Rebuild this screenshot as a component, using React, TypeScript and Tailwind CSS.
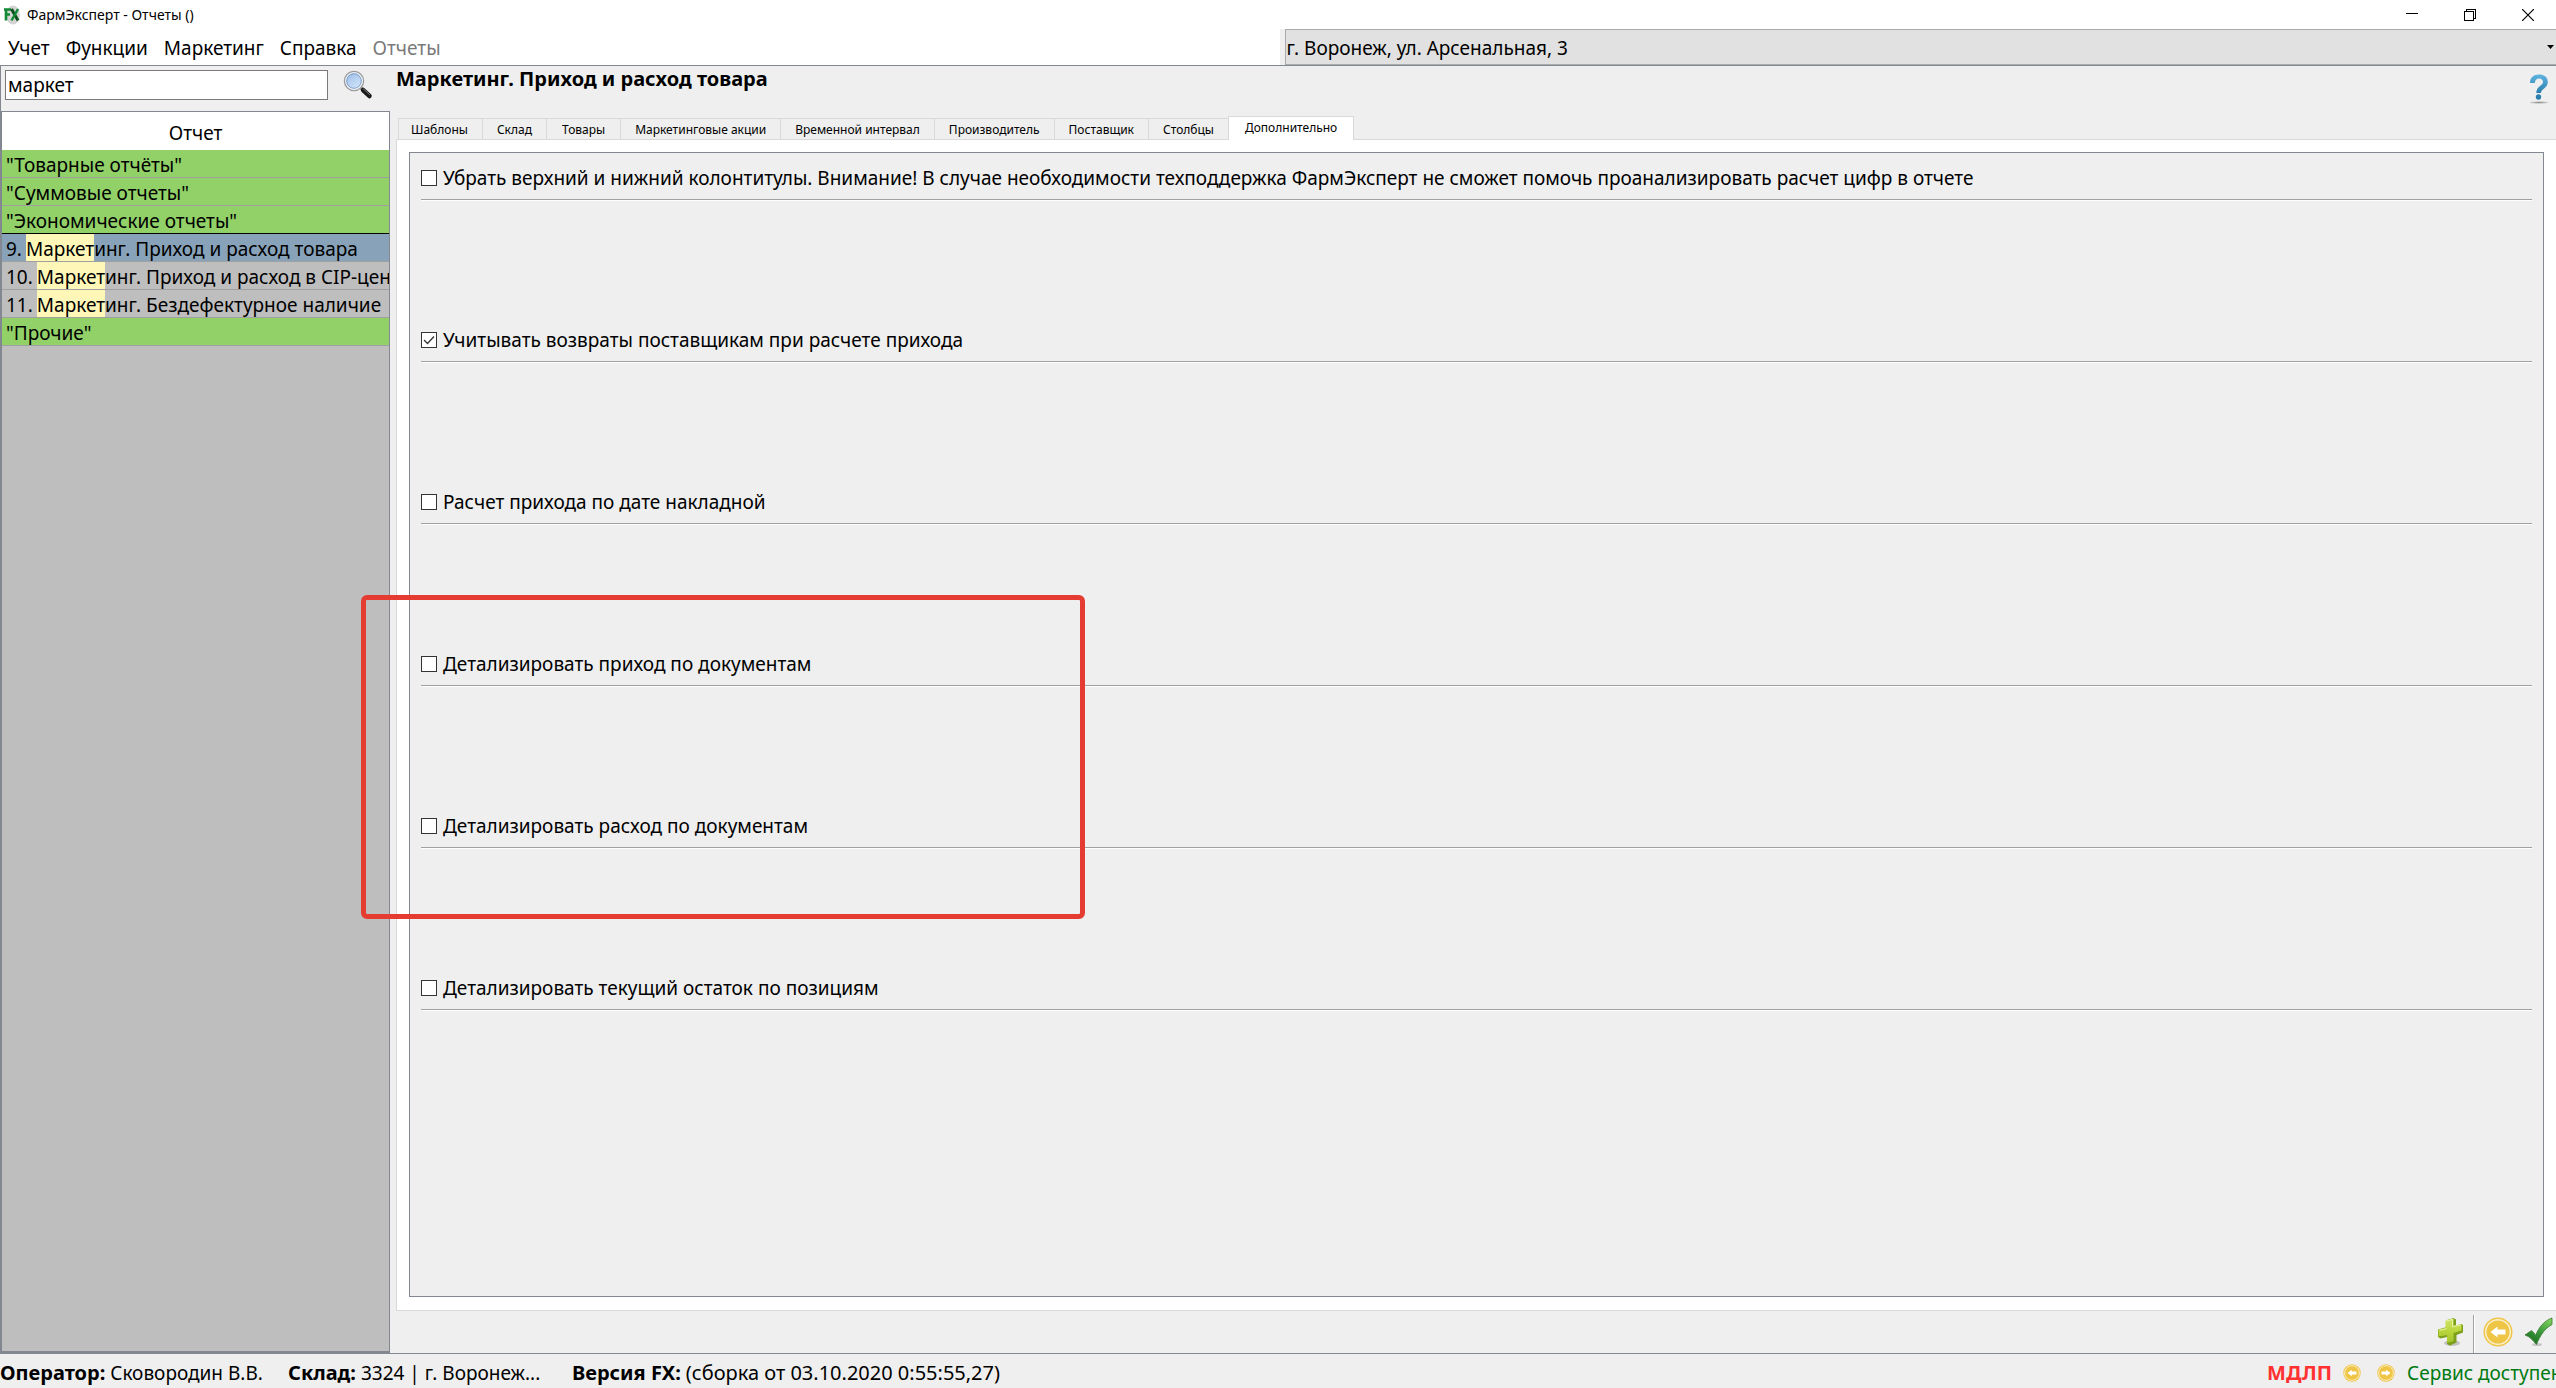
import type { ReactNode } from "react";

const menu = ["Учет", "Функции", "Маркетинг", "Справка"];

const tabs = [
  "Шаблоны",
  "Склад",
  "Товары",
  "Маркетинговые акции",
  "Временной интервал",
  "Производитель",
  "Поставщик",
  "Столбцы",
];

const options = [
  {
    label:
      "Убрать верхний и нижний колонтитулы. Внимание! В случае необходимости техподдержка ФармЭксперт не сможет помочь проанализировать расчет цифр в отчете",
    checked: false,
  },
  { label: "Учитывать возвраты поставщикам при расчете прихода", checked: true },
  { label: "Расчет прихода по дате накладной", checked: false },
  { label: "Детализировать приход по документам", checked: false },
  { label: "Детализировать расход по документам", checked: false },
  { label: "Детализировать текущий остаток по позициям", checked: false },
];

type Report = { kind: "group" | "item"; prefix?: string; match?: string; text: string; selected?: boolean };

const reports: Report[] = [
  { kind: "group", text: '"Товарные отчёты"' },
  { kind: "group", text: '"Суммовые отчеты"' },
  { kind: "group", text: '"Экономические отчеты"' },
  { kind: "item", prefix: "9.", match: "Маркет", text: "инг. Приход и расход товара", selected: true },
  { kind: "item", prefix: "10.", match: "Маркет", text: "инг. Приход и расход в CIP-цен" },
  { kind: "item", prefix: "11.", match: "Маркет", text: "инг. Бездефектурное наличие" },
  { kind: "group", text: '"Прочие"' },
];

function AppLogo() {
  return (
    <svg width="17" height="20" viewBox="0 0 17 20" aria-hidden="true">
      <ellipse cx="9" cy="10" rx="7" ry="9.5" fill="#d4d4d4" />
      <path d="M0 4.500h7M2 4.500v11M2 9.500h4" stroke="#128a35" strokeWidth="2.600" fill="none" />
      <path d="M7.500 4l6.500 11.500" stroke="#0a4f1e" strokeWidth="3" fill="none" />
      <path d="M14 4L7.500 15.500" stroke="#128a35" strokeWidth="2.500" fill="none" />
    </svg>
  );
}

function SearchIcon() {
  return (
    <svg width="30" height="30" viewBox="0 0 30 30" aria-hidden="true">
      <defs>
        <linearGradient id="lens" x1="0" y1="0" x2="0.6" y2="1">
          <stop offset="0" stopColor="#8fb2e2" />
          <stop offset="0.5" stopColor="#b5cff0" />
          <stop offset="1" stopColor="#d3e6fb" />
        </linearGradient>
      </defs>
      <path d="M17.500 17.500l3 3" stroke="#8a8a8a" strokeWidth="3" />
      <path d="M20 20l6.500 6" stroke="#1b1b1b" strokeWidth="4.500" strokeLinecap="round" />
      <path d="M20.500 19l6 5.500" stroke="#777" strokeWidth="1" strokeLinecap="round" />
      <circle cx="11" cy="11" r="9.500" fill="url(#lens)" stroke="#9b9b9b" strokeWidth="1.500" />
      <circle cx="11" cy="11" r="8.200" fill="none" stroke="#f1f4f8" strokeWidth="1.400" />
      <circle cx="11" cy="11" r="7.300" fill="none" stroke="#5f82b3" strokeWidth="0.700" />
    </svg>
  );
}

function HelpIcon() {
  return (
    <svg width="20" height="31" viewBox="0 0 20 31" aria-hidden="true">
      <defs>
        <linearGradient id="help" x1="0" y1="0" x2="0" y2="1">
          <stop offset="0" stopColor="#5fb4e0" />
          <stop offset="1" stopColor="#2a7fae" />
        </linearGradient>
        <radialGradient id="helpShadow">
          <stop offset="0" stopColor="#8c8c8c" />
          <stop offset="1" stopColor="#d8d8d8" />
        </radialGradient>
      </defs>
      <ellipse cx="10" cy="28.500" rx="9.500" ry="1.300" fill="url(#helpShadow)" />
      <path
        d="M1 9C1 3.500 4.500 0.500 10 0.500s8.800 3 8.800 7.500c0 3-1.500 4.800-4 6.700-1.800 1.400-2.800 2.300-2.800 4.300H7.300c0-3.600 1.500-5.300 4-7.300 1.900-1.500 2.700-2.300 2.700-3.900C14 5.900 12.500 4.600 10 4.600S6 6.200 5.800 9z"
        fill="url(#help)"
      />
      <circle cx="9.500" cy="23" r="2.700" fill="#2a7fae" />
    </svg>
  );
}

function PlusIcon() {
  return (
    <svg width="28" height="30" viewBox="0 0 28 30" aria-hidden="true">
      <defs>
        <linearGradient id="plus" x1="0" y1="0" x2="0" y2="1">
          <stop offset="0" stopColor="#d3e56b" />
          <stop offset="0.5" stopColor="#b9d63c" />
          <stop offset="1" stopColor="#a3c52a" />
        </linearGradient>
      </defs>
      <ellipse cx="16" cy="26" rx="8" ry="3" fill="#c2c2c2" />
      <path
        d="M11 3l6.500-2L20 2.500v6L25.500 7l1.500 1v7.500L20.500 18v7.500L14 28.500l-3-1.500v-7l-6.500 1.500L2 20v-7.500l9-2.500z"
        fill="#7c9f1c"
      />
      <path d="M9.500 3.500L17.500 1.500v7.200L25.500 7v6.500l-8 2.500v8L11 26v-8L2.500 19.500v-7L9.500 11z" fill="url(#plus)" />
      <path d="M10.500 4l6-1.600v7.300l8-1.700M3.500 13.300l7-1.600" stroke="#e8f3a4" strokeWidth="1" fill="none" />
    </svg>
  );
}

function CoinArrow({ size, flip }: { size: number; flip?: boolean }) {
  return (
    <svg width={size} height={size} viewBox="0 0 30 30" aria-hidden="true">
      <circle cx="15" cy="15" r="14.500" fill="#efc546" />
      <circle cx="15" cy="15" r="12.300" fill="none" stroke="#faf0cf" strokeWidth="1.500" />
      <path
        d="M7.500 15l7-5.500V12.500H22.500v5H14.500v3z"
        fill="#fff"
        transform={flip ? "matrix(-1 0 0 1 30 0)" : undefined}
      />
    </svg>
  );
}

function CheckIcon() {
  return (
    <svg width="29" height="30" viewBox="0 0 29 30" aria-hidden="true">
      <defs>
        <linearGradient id="tick" x1="0.8" y1="0" x2="0.300" y2="1">
          <stop offset="0" stopColor="#7fd25a" />
          <stop offset="0.500" stopColor="#3b9a3b" />
          <stop offset="1" stopColor="#1c6e22" />
        </linearGradient>
      </defs>
      <ellipse cx="13" cy="27.500" rx="5" ry="1.600" fill="#c4c4c4" />
      <path
        d="M1 18l6.500-4.500c2 1.500 3 3 4 5C15 10 20 4 28 1v6.500C20 12 16 19 12.500 27.500 9 23.500 6 19.500 1 18z"
        fill="url(#tick)"
        stroke="#3c7a35"
        strokeWidth="0.800"
      />
    </svg>
  );
}

function IconButton({ label, children }: { label: string; children: ReactNode }) {
  return (
    <button type="button" aria-label={label} className="flex shrink-0 items-center justify-center">
      {children}
    </button>
  );
}

function TitleBar() {
  return (
    <header className="flex h-[29px] shrink-0 items-center bg-white pl-1">
      <AppLogo />
      <h1 className="ml-[6px] text-[14px] leading-5">ФармЭксперт - Отчеты ()</h1>
      <div className="mr-[6px] ml-auto flex gap-[14px]">
        <button type="button" aria-label="Свернуть" className="flex h-7 w-11 items-center justify-center">
          <svg width="12" height="13" viewBox="0 0 12 13">
            <path d="M0 5.500h12" stroke="#000" shapeRendering="crispEdges" />
          </svg>
        </button>
        <button type="button" aria-label="Восстановить" className="flex h-7 w-11 items-center justify-center">
          <svg width="12" height="12" viewBox="0 0 12 12" fill="none" stroke="#000" shapeRendering="crispEdges">
            <path d="M0.500 2.500h9v9h-9zM2.500 2.500v-2h9v9h-2" />
          </svg>
        </button>
        <button type="button" aria-label="Закрыть" className="flex h-7 w-11 items-center justify-center">
          <svg width="12" height="12" viewBox="0 0 12 12" stroke="#000" strokeWidth="1.200">
            <path d="M0 0l12 12M12 0L0 12" />
          </svg>
        </button>
      </div>
    </header>
  );
}

function MenuBar() {
  return (
    <div className="flex h-9 shrink-0 bg-white">
      <nav className="flex flex-1 items-center gap-4 pt-[2px] pl-2 text-[19px] leading-7">
        {menu.map((m) => (
          <button key={m} type="button">
            {m}
          </button>
        ))}
        <button type="button" disabled className="text-[#7a7a7a]">
          Отчеты
        </button>
      </nav>
      <div className="relative flex flex-1 bg-[#efefef] pl-[5px]">
        <select
          aria-label="Аптека"
          className="w-full appearance-none border border-r-0 border-[#a8acac] bg-[#e1e1e1] pt-[2px] pl-px text-[19px] leading-7"
        >
          <option>г. Воронеж, ул. Арсенальная, 3</option>
        </select>
        <svg className="pointer-events-none absolute top-4 right-0.5" width="7" height="4" viewBox="0 0 7 4" aria-hidden="true">
          <path d="M0 0h7L3.500 4z" fill="#000" />
        </svg>
      </div>
    </div>
  );
}

function ReportRow({ report }: { report: Report }) {
  const bg = report.kind === "group" ? "bg-[#92d168]" : report.selected ? "bg-[#88a3b9]" : "bg-[#bebebe]";
  const edge = report.text.startsWith('"Эконом') ? "border-black" : "border-[#a0a0a0]";
  return (
    <tr>
      <td className={`h-7 overflow-hidden border-b p-0 pl-1 whitespace-nowrap ${bg} ${edge}`}>
        <button type="button" className="flex h-[27px] text-left leading-[30px]">
          {report.prefix && <span className="mr-1">{report.prefix}</span>}
          {report.match && <span className="h-[27px] bg-[#fff7b8]">{report.match}</span>}
          <span>{report.text}</span>
        </button>
      </td>
    </tr>
  );
}

function Sidebar() {
  return (
    <aside className="flex w-[390px] shrink-0 flex-col border-l border-[#828790]">
      <form className="flex h-[45px] items-start pt-1 pl-1" onSubmit={(e) => e.preventDefault()}>
        <input
          type="text"
          aria-label="Поиск отчета"
          defaultValue="маркет"
          className="h-[30px] w-[323px] border border-[#7a7a7a] bg-white px-[2px] text-[19px] leading-7 outline-none"
        />
        <button type="submit" aria-label="Найти" className="ml-[15px]">
          <SearchIcon />
        </button>
      </form>
      <div className="flex-1 border border-b-2 border-[#828790] bg-[#bebebe]">
        <table className="w-full table-fixed border-separate border-spacing-0 text-[19px]">
          <thead>
            <tr>
              <th className="h-[38px] bg-white p-0 pt-1 leading-[30px] font-normal">Отчет</th>
            </tr>
          </thead>
          <tbody>
            {reports.map((r) => (
              <ReportRow key={r.text} report={r} />
            ))}
          </tbody>
        </table>
      </div>
    </aside>
  );
}

function Option({ label, checked }: { label: string; checked: boolean }) {
  return (
    <div className="h-[162px]">
      <div className="border-b border-[#a0a0a0] shadow-[0_1px_0_#fff]">
        <label className="flex h-[46px] w-fit items-center gap-[6px] pt-1 text-[19px] leading-7">
          <span className="relative flex h-4 w-4">
            <input
              type="checkbox"
              defaultChecked={checked}
              className="peer h-4 w-4 appearance-none border border-[#333] bg-white"
            />
            <svg
              className="pointer-events-none invisible absolute inset-0 peer-checked:visible"
              width="16"
              height="16"
              viewBox="0 0 16 16"
              aria-hidden="true"
            >
              <path d="M3 8l3.500 3.500L13 4.500" stroke="#333" strokeWidth="1.300" fill="none" />
            </svg>
          </span>
          {label}
        </label>
      </div>
    </div>
  );
}

function Workspace() {
  return (
    <main className="flex min-w-0 flex-1 flex-col">
      <div className="flex h-[51px] items-start justify-between pr-[7px] pl-[6px]">
        <h2 className="text-[20px] leading-[26px] font-bold">Маркетинг. Приход и расход товара</h2>
        <button type="button" aria-label="Помощь" className="pt-2">
          <HelpIcon />
        </button>
      </div>
      <div role="tablist" className="flex h-[22px] shrink-0 items-end pl-2 text-[12px] leading-4">
        {tabs.map((t) => (
          <button
            key={t}
            type="button"
            role="tab"
            aria-selected={false}
            className="h-[21px] border-t border-l border-[#d9d9d9] px-[14px] pt-[2px] whitespace-nowrap first:pl-3 nth-3:px-[15px]"
          >
            {t}
          </button>
        ))}
        <button
          type="button"
          role="tab"
          aria-selected={true}
          className="z-10 -mb-px h-6 border border-b-0 border-[#d9d9d9] bg-white px-4 pb-[2px]"
        >
          Дополнительно
        </button>
      </div>
      <section className="ml-[6px] flex flex-1 flex-col border border-r-0 border-[#d9d9d9] bg-white pt-3 pr-3 pb-[13px] pl-3">
        <div className="flex-1 border border-[#828790] bg-[#efefef] pr-[11px] pl-[11px]">
          {options.map((o) => (
            <Option key={o.label} label={o.label} checked={o.checked} />
          ))}
        </div>
      </section>
      <div className="flex h-[42px] shrink-0 justify-end pr-[3px]">
        <IconButton label="Добавить">
          <PlusIcon />
        </IconButton>
        <span className="mt-1 mr-[8px] ml-[9px] w-0.5 border-r border-l border-r-white border-l-[#a0a0a0]" />
        <IconButton label="Назад">
          <CoinArrow size={30} />
        </IconButton>
        <span className="w-[11px]" />
        <IconButton label="Применить">
          <CheckIcon />
        </IconButton>
      </div>
    </main>
  );
}

function StatusBar() {
  return (
    <footer className="flex h-[35px] shrink-0 items-center overflow-hidden border-t border-[#828790] pt-1 text-[19px] leading-7 whitespace-nowrap">
      <p className="w-[288px]">
        <b className="text-[20px]">Оператор:</b> Сковородин В.В.
      </p>
      <p className="w-[284px]">
        <b className="text-[20px]">Склад:</b> 3324 | г. Воронеж...
      </p>
      <p>
        <b className="text-[20px]">Версия FX:</b> <span className="text-[20px]">(сборка от 03.10.2020 0:55:55,27)</span>
      </p>
      <b className="ml-auto text-[20px] text-[#ff3131]">МДЛП</b>
      <span className="ml-[11px] flex gap-4">
        <IconButton label="Предыдущий">
          <CoinArrow size={18} />
        </IconButton>
        <IconButton label="Следующий">
          <CoinArrow size={18} flip />
        </IconButton>
      </span>
      <span className="ml-3 w-[149px] overflow-hidden text-[#007a12]">Сервис доступен</span>
    </footer>
  );
}

export default function App() {
  return (
    <div className="relative flex min-h-screen flex-col overflow-hidden bg-[#efefef] font-['Noto_Sans',sans-serif] text-black">
      <TitleBar />
      <MenuBar />
      <div className="flex flex-1 border-t border-[#828790]">
        <Sidebar />
        <Workspace />
      </div>
      <StatusBar />
      <div className="pointer-events-none absolute top-[595px] left-[361px] z-20 h-[324px] w-[724px] rounded-md border-[5px] border-[#e53c31]" />
    </div>
  );
}
